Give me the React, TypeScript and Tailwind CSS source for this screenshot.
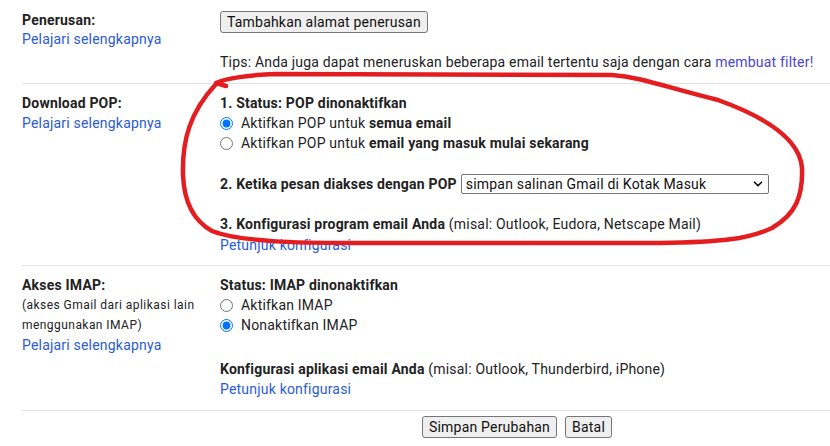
import { ChevronDown } from "lucide-react";

function Radio({ checked, children }: { checked?: boolean; children: React.ReactNode }) {
  return (
    <label className="flex items-center h-5">
      <input
        type="radio"
        defaultChecked={checked}
        className="m-0 mr-2 w-[13px] h-[13px] accent-[#0075ff]"
        name={String(children)}
      />
      <span>{children}</span>
    </label>
  );
}

function Link({ children }: { children: React.ReactNode }) {
  return <a className="text-[#2b5bd7] cursor-pointer">{children}</a>;
}

function Btn({ children }: { children: React.ReactNode }) {
  return (
    <button className="h-[22px] px-[6px] bg-[#efefef] border border-[#767676] rounded-[3px] text-[14px] leading-5 text-[#111]">
      {children}
    </button>
  );
}

export default function App() {
  return (
    <div
      className="relative w-[830px] h-[446px] overflow-hidden bg-white text-[14px] leading-5 tracking-[0.2px] text-[#222]"
      style={{ fontFamily: "Roboto, 'Liberation Sans', sans-serif" }}
    >
      <div className="pl-[22px]">
        {/* Penerusan */}
        <div className="grid grid-cols-[198px_1fr] border-b border-[#e3e3e3] pt-[10px] pb-[11px]">
          <div>
            <div className="font-bold">Penerusan:</div>
            <div className="-mt-px">
              <Link>Pelajari selengkapnya</Link>
            </div>
          </div>
          <div>
            <div className="pt-px">
              <Btn>Tambahkan alamat penerusan</Btn>
            </div>
            <div className="mt-[19px] whitespace-nowrap">
              Tips: Anda juga dapat meneruskan beberapa email tertentu saja dengan cara{" "}
              <a className="text-[#4a44d4]">membuat filter!</a>
            </div>
          </div>
        </div>

        {/* Download POP */}
        <div className="grid grid-cols-[198px_1fr] border-b border-[#e3e3e3] pt-[9px] pb-[10px]">
          <div>
            <div className="font-bold">Download POP:</div>
            <Link>Pelajari selengkapnya</Link>
          </div>
          <div>
            <div className="font-bold">1. Status: POP dinonaktifkan</div>
            <Radio checked>
              Aktifkan POP untuk <b>semua email</b>
            </Radio>
            <Radio>
              Aktifkan POP untuk <b>email yang masuk mulai sekarang</b>
            </Radio>
            <div className="mt-[21px] flex items-center h-5">
              <span className="font-bold mr-[4px]">2. Ketika pesan diakses dengan POP</span>
              <div className="relative">
                <select className="appearance-none w-[308px] h-5 border border-[#767676] rounded-[2px] pl-[4px] text-[14px] leading-[18px] tracking-[0.2px] text-[#111] bg-white">
                  <option>simpan salinan Gmail di Kotak Masuk</option>
                </select>
                <ChevronDown
                  size={14}
                  strokeWidth={3}
                  className="absolute right-[4px] top-[3px] text-[#111] pointer-events-none"
                />
              </div>
            </div>
            <div className="mt-5">
              <b>3. Konfigurasi program email Anda</b> (misal: Outlook, Eudora, Netscape Mail)
            </div>
            <div className="mt-px">
              <Link>Petunjuk konfigurasi</Link>
            </div>
          </div>
        </div>

        {/* Akses IMAP */}
        <div className="grid grid-cols-[198px_1fr] border-b border-[#e3e3e3] pt-[9px] pb-[11px]">
          <div>
            <div className="font-bold">Akses IMAP:</div>
            <div className="text-[12px] leading-5 tracking-[0.45px]">(akses Gmail dari aplikasi lain</div>
            <div className="text-[12px] leading-5 tracking-[0.45px]">menggunakan IMAP)</div>
            <Link>Pelajari selengkapnya</Link>
          </div>
          <div>
            <div className="font-bold">Status: IMAP dinonaktifkan</div>
            <Radio>Aktifkan IMAP</Radio>
            <Radio checked>Nonaktifkan IMAP</Radio>
            <div className="mt-6">
              <b>Konfigurasi aplikasi email Anda</b> (misal: Outlook, Thunderbird, iPhone)
            </div>
            <div>
              <Link>Petunjuk konfigurasi</Link>
            </div>
          </div>
        </div>

        {/* Buttons */}
        <div className="grid grid-cols-[198px_594px] pt-[5px]">
          <div />
          <div className="flex justify-center gap-2">
            <Btn>Simpan Perubahan</Btn>
            <Btn>Batal</Btn>
          </div>
        </div>
      </div>

      {/* red hand-drawn annotation */}
      <svg
        className="absolute inset-0 pointer-events-none"
        width="830"
        height="446"
        viewBox="0 0 830 446"
      >
        <path
          d="M 226 86 L 216 83 C 224 79 246 75 276 74 L 612 75 C 640 77 662 86 718 100 C 768 118 800 140 802 168 C 803 196 796 214 772 228 C 748 239 722 242 660 243 L 350 243 C 300 243 240 242 212 231 C 192 220 184 200 183 175 C 182 140 190 112 216 84"
          fill="none"
          stroke="#e41e20"
          strokeWidth="4.5"
          strokeLinecap="round"
          strokeLinejoin="round"
        />
      </svg>
    </div>
  );
}
